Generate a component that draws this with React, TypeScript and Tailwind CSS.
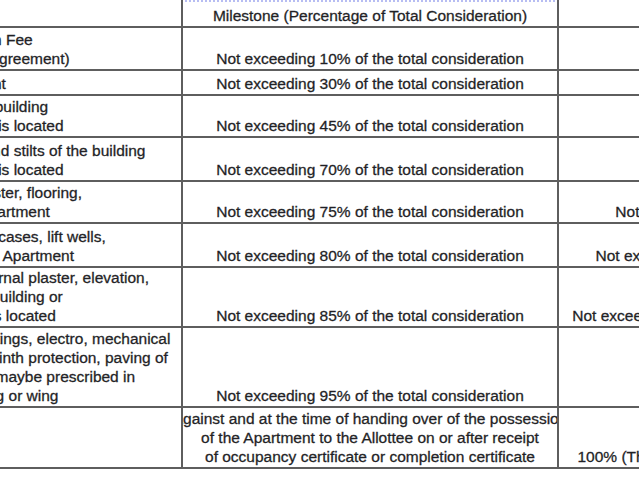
import { FC } from "react";

type Row = {
  h: string;
  left: string[];
  mid: string[];
  right: string[];
};

const rows: Row[] = [
  {
    h: "h-[43px]",
    left: [
      "On the Booking Amount / Application Fee",
      "(to be paid before execution of the Agreement)",
    ],
    mid: ["Not exceeding 10% of the total consideration"],
    right: [],
  },
  {
    h: "h-[25px]",
    left: ["Upon the execution of the Agreement"],
    mid: ["Not exceeding 30% of the total consideration"],
    right: [],
  },
  {
    h: "h-[42px]",
    left: [
      "On Completion of the Plinths of the building",
      "or wing in which the said Apartment is located",
    ],
    mid: ["Not exceeding 45% of the total consideration"],
    right: [],
  },
  {
    h: "h-[44px]",
    left: [
      "On completion of Slabs, Podiums and stilts of the building",
      "or wing in which the said Apartment is located",
    ],
    mid: ["Not exceeding 70% of the total consideration"],
    right: [],
  },
  {
    h: "h-[42px]",
    left: [
      "On completion of Walls, internal plaster, flooring,",
      "fit doors and windows of the said Apartment",
    ],
    mid: ["Not exceeding 75% of the total consideration"],
    right: ["Not exceeding 75% of total"],
  },
  {
    h: "h-[44px]",
    left: [
      "On completion of the plumbing, staircases, lift wells,",
      "Lobby upto the floor level of the said Apartment",
    ],
    mid: ["Not exceeding 80% of the total consideration"],
    right: ["Not exceeding 80% of total Price"],
  },
  {
    h: "h-[60px]",
    left: [
      "On completion of plumbing and external plaster, elevation,",
      "terraces With waterproofing, of the building or",
      "Wing, in which the Said Apartment is located",
    ],
    mid: ["Not exceeding 85% of the total consideration"],
    right: ["Not exceeding 85% of the total amount."],
  },
  {
    h: "h-[80px]",
    left: [
      "On the lifts, water pumps, electric fittings, electro, mechanical",
      "Requirements, Entrance Lobby/S, plinth protection, paving of",
      "Area and all Other requirements as maybe prescribed in",
      "the Agreement of Sale of the building or wing",
    ],
    mid: ["Not exceeding 95% of the total consideration"],
    right: [],
  },
  {
    h: "h-[61px]",
    left: [],
    mid: [
      "Against and at the time of handing over of the possession",
      "of the Apartment to the Allottee on or after receipt",
      "of occupancy certificate or completion certificate",
    ],
    right: ["100% (The total of sale consideration)"],
  },
];

const cell =
  "flex flex-col justify-end overflow-hidden border-r-2 border-b-2 border-[#5e5e5e] pb-px";

const Lines: FC<{ lines: string[] }> = ({ lines }) => (
  <>
    {lines.map((l, i) => (
      <div key={i} className="whitespace-nowrap">
        {l}
      </div>
    ))}
  </>
);

const App: FC = () => {
  return (
    <div className="w-[639px] h-[480px] overflow-hidden bg-white font-['Liberation_Sans',Arial,sans-serif] text-[15.5px] leading-[19px] text-[#1d1d22] [-webkit-text-stroke:0.3px_#2a2a30]">
      <div className="ml-[-254px] w-[1113px] grid grid-cols-[437px_376px_300px]">
        {/* header */}
        <div className={`${cell} h-[28px]`} />
        <div className="flex flex-col overflow-hidden border-r-2 border-b-2 border-[#5e5e5e] pb-px h-[28px] items-center">
          <div className="self-stretch mx-[2px] border-t-2 border-dotted border-[#b7bdf2]" />
          <div className="mt-auto whitespace-nowrap">
            Milestone (Percentage of Total Consideration)
          </div>
        </div>
        <div className={`${cell} h-[28px]`} />

        {rows.map((r, i) => (
          <div key={i} className="contents">
            <div className={`${cell} ${r.h} items-start pl-[4px]`}>
              <Lines lines={r.left} />
            </div>
            <div className={`${cell} ${r.h} items-center`}>
              <Lines lines={r.mid} />
            </div>
            <div className={`${cell} ${r.h} items-center`}>
              <Lines lines={r.right} />
            </div>
          </div>
        ))}
      </div>
    </div>
  );
};

export default App;
